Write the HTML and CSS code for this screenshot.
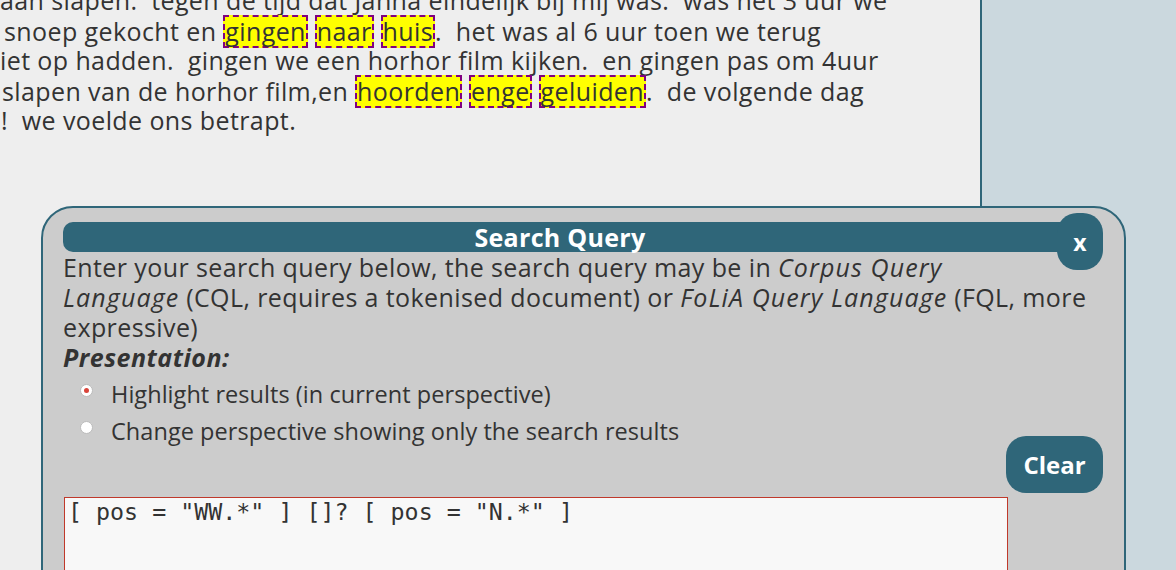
FILE: index.html
```html
<!DOCTYPE html>
<html>
<head>
<meta charset="utf-8">
<link rel="stylesheet" href="styles.css">
</head>
<body>
<div class="page">
  <div class="main">
    <div class="doc">
      <div class="line l1">aan slapen.&nbsp; tegen de tijd dat Janna eindelijk bij mij was.&nbsp; was het 3 uur we</div>
      <div class="line l2">snoep gekocht en <span class="hl">gingen</span> <span class="hl">naar</span> <span class="hl">huis</span>.&nbsp; het was al 6 uur toen we terug</div>
      <div class="line l3">iet op hadden.&nbsp; gingen we een horhor film kijken.&nbsp; en gingen pas om 4uur</div>
      <div class="line l4">slapen van de horhor film,en <span class="hl">hoorden</span> <span class="hl">enge</span> <span class="hl">geluiden</span>.&nbsp; de volgende dag</div>
      <div class="line l5">!&nbsp; we voelde ons betrapt.</div>
    </div>
  </div>
  <div class="side"></div>
</div>

<div class="dialog">
  <div class="titlebar">Search Query</div>
  <button class="close">x</button>
  <p class="intro">Enter your search query below, the search query may be in <em>Corpus Query</em><br><em>Language</em> (CQL, requires a tokenised document) or <em>FoLiA Query Language</em> (FQL, more<br>expressive)</p>
  <div class="label">Presentation:</div>
  <div class="options">
    <label class="opt"><span class="radio checked"></span>Highlight results (in current perspective)</label>
    <label class="opt"><span class="radio"></span>Change perspective showing only the search results</label>
  </div>
  <div class="actions"><button class="clear">Clear</button></div>
  <div class="query">[ pos = "WW.*" ] []? [ pos = "N.*" ]</div>
</div>
</body>
</html>
```

FILE: styles.css
```css
html, body {
  margin: 0;
  padding: 0;
  height: 100%;
  overflow: hidden;
}
body {
  background: #eeeeee;
  font-family: "Open Sans", "Noto Sans", sans-serif;
  color: #333333;
}
.page {
  display: flex;
  height: 570px;
}
.main {
  width: 980px;
  background: #eeeeee;
  border-right: 2px solid #2f6679;
  overflow: hidden;
}
.side {
  flex: 1;
  background: #cbd8de;
}
.doc {
  margin-top: -15px;
  font-size: 25px;
  line-height: 30px;
  letter-spacing: 0.4px;
}
.line {
  height: 30px;
  white-space: nowrap;
}
.l1 { padding-left: 0; }
.l2 { padding-left: 4px; }
.l3 { padding-left: 0; }
.l4 { padding-left: 2px; }
.l5 { padding-left: 1px; }
.hl {
  display: inline-block;
  line-height: 29px;
  background: #ffff00;
  border: 2px dashed #800080;
}

.dialog {
  position: absolute;
  left: 41px;
  top: 206px;
  width: 1085px;
  height: 400px;
  background: #cccccc;
  border: 2px solid #2f6679;
  border-radius: 32px 32px 0 0;
  padding: 14px 0 0 20px;
  box-sizing: border-box;
}
.titlebar {
  width: 1002px;
  height: 30px;
  padding-right: 8px;
  box-sizing: border-box;
  background: #2f6679;
  border-radius: 10px 0 0 10px;
  color: #ffffff;
  font-weight: bold;
  font-size: 25px;
  line-height: 30px;
  letter-spacing: 0.3px;
  text-align: center;
}
.close {
  position: absolute;
  left: 1014px;
  top: 5px;
  width: 46px;
  height: 57px;
  border: none;
  border-radius: 20px;
  background: #2f6679;
  color: #ffffff;
  font-family: "Open Sans", sans-serif;
  font-weight: bold;
  font-size: 23px;
  padding: 0;
}
.intro {
  margin: 0;
  font-size: 25px;
  line-height: 30px;
  letter-spacing: 0.4px;
}
.intro em {
  font-style: italic;
  letter-spacing: 1.1px;
}
.label {
  font-size: 25px;
  line-height: 30px;
  font-weight: bold;
  font-style: italic;
  letter-spacing: 0.5px;
}
.options {
  display: flex;
  flex-direction: column;
  gap: 7px;
  padding-left: 17px;
  margin-top: 7px;
}
.opt {
  display: flex;
  align-items: center;
  font-size: 23.5px;
  line-height: 30px;
  letter-spacing: 0.05px;
}
.radio {
  width: 13px;
  height: 13px;
  border-radius: 50%;
  background: #ffffff;
  border: 1px solid #bbbbbb;
  box-sizing: border-box;
  margin-right: 18px;
  margin-top: -8px;
  position: relative;
  flex: none;
}
.radio.checked::after {
  content: "";
  position: absolute;
  left: 3px;
  top: 3px;
  width: 5px;
  height: 5px;
  border-radius: 50%;
  background: #d9443a;
}
.actions {
  display: flex;
  justify-content: flex-end;
  width: 1040px;
  margin-top: -10px;
}
.clear {
  width: 97px;
  height: 57px;
  border: none;
  border-radius: 20px;
  background: #2f6679;
  color: #ffffff;
  font-family: "Open Sans", sans-serif;
  font-weight: bold;
  font-size: 24px;
  padding: 0;
}
.query {
  width: 944px;
  height: 100px;
  margin-top: 4px;
  margin-left: 1px;
  background: #f8f8f8;
  border: 1px solid #c0392b;
  box-sizing: border-box;
  font-family: "DejaVu Sans Mono", monospace;
  font-size: 23.3px;
  line-height: 28px;
  padding: 0 3px;
  white-space: pre;
}
```
